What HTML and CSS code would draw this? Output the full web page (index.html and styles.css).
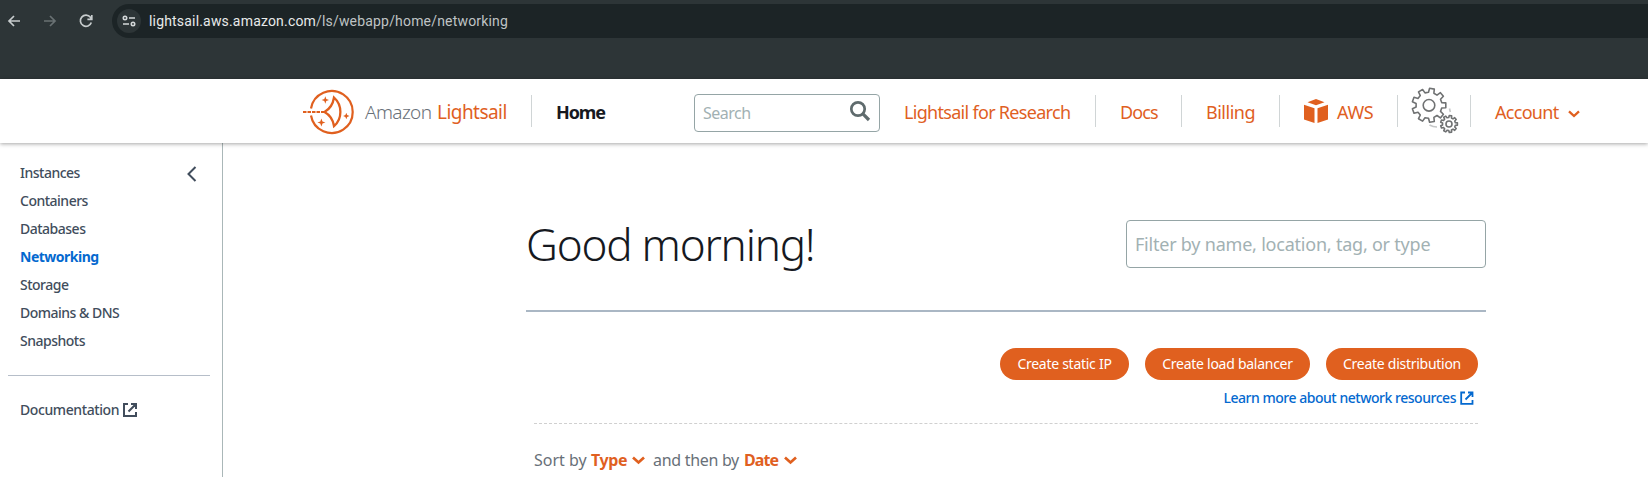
FILE: index.html
```html
<!DOCTYPE html>
<html lang="en">
<head>
<meta charset="utf-8">
<title>Amazon Lightsail</title>
<link rel="stylesheet" href="styles.css">
</head>
<body>
<div class="browser">
  <div class="browser-nav">
    <svg class="nav-icon" viewBox="0 0 16 16"><path d="M14 8H3M8 3 3 8l5 5"/></svg>
    <svg class="nav-icon disabled" viewBox="0 0 16 16"><path d="M2 8h11M8 3l5 5-5 5"/></svg>
    <svg class="nav-icon" viewBox="0 0 16 16"><path d="M13.3 9.5A5.6 5.6 0 1 1 12.4 4.3L13.6 6M13.8 2v4.4H9.4"/></svg>
  </div>
  <div class="omnibox">
    <span class="site-info"><svg width="14" height="12" viewBox="0 0 14 12"><circle cx="3" cy="3" r="1.7"/><path d="M7 3h6M1 9h6"/><circle cx="11" cy="9" r="1.7"/></svg></span>
    <span class="url"><b class="domain">lightsail.aws.amazon.com</b>/ls/webapp/home/networking</span>
  </div>
</div>
<header class="header">
  <a class="brand">
    <svg class="logo" width="54" height="48" viewBox="0 0 54 48"><g fill="none" stroke="#e0601f" stroke-width="2.2"><path d="M9 20.500a21 21 0 1 1 0 7"/><path d="M1 24h21" stroke-dasharray="3.500 1"/><path d="M32 9.500C40.500 17 40.500 31 32 38C31 31.500 27.500 26.700 22.500 24C27.500 21.200 31 16 32 9.500Z" stroke-width="2.300"/></g><path fill="#e0601f" d="M23.300 8.300l1 2.700 2.700 1-2.700 1-1 2.700-1-2.700-2.700-1 2.700-1zM44.300 24.800l.9 2.300 2.300.9-2.300.9-.9 2.300-.9-2.300-2.300-.9 2.300-.9zM19.400 30.500l1.100 2.900 2.900 1.100-2.900 1.100-1.100 2.900-1.100-2.900-2.900-1.100 2.900-1.100z"/></svg>
    <span class="brand-amazon">Amazon</span><span class="brand-name">Lightsail</span>
  </a>
  <a class="home">Home</a>
  <div class="search"><span class="search-hint">Search</span><svg width="22" height="22" viewBox="0 0 22 22" fill="none" stroke="#5f6b6d" stroke-width="2.700"><circle cx="9" cy="9" r="6.700"/><path d="M13.700 13.700l6.300 6.300" stroke-width="3.200"/></svg></div>
  <a class="link research">Lightsail for Research</a>
  <a class="link docs">Docs</a>
  <a class="link billing">Billing</a>
  <a class="link aws"><svg width="24" height="24" viewBox="0 0 24 24" fill="#e0601f"><path d="M12 0l8.500 3.200L12 6.300 3.500 3.200zM0 5.800l10.500 3.400V24L0 20.600zM24 5.800L13.500 9.200V24L24 20.600z"/></svg><span>AWS</span></a>
  <a class="gears"><svg width="48" height="48" viewBox="0 0 48 48" fill="none" stroke="#707273" stroke-width="1.600" stroke-linejoin="round">
    <defs><path id="gear" vector-effect="non-scaling-stroke" d="M-.5-13 .6-17 5.300-16.200 4.900-12.100 8-10.200 11.400-12.600 14.400-9 11.500-6.100 12.700-2.700 16.800-2.400V2.400L12.700 2.700 11.500 6.100 14.400 9 11.400 12.600 8 10.200 4.900 12.100 5.300 16.200 .6 17-.5 13-4 12.400-6.400 15.800-10.500 13.400-8.700 9.700-11 6.900-15 8-16.600 3.500-12.900 1.800V-1.800L-16.600-3.500-15-8-11-6.900-8.700-9.700-10.500-13.400-6.400-15.800-4-12.400Z"/></defs>
    <use href="#gear" x="18" y="18.300"/><circle cx="18" cy="18.300" r="5.800"/>
    <use href="#gear" transform="translate(38 37) scale(.5)"/><circle cx="38" cy="37" r="3"/>
    <path stroke="#c5c7c8" d="M18.500 38q3.500 2 7.500 2M38.500 21.500l.8 3.500"/></svg></a>
  <a class="link account"><span>Account</span><svg width="12" height="8" viewBox="0 0 12 8" fill="none" stroke="#e0601f" stroke-width="2.300"><path d="M1 1.300l5 4.700 5-4.700"/></svg></a>
</header>
<div class="body">
  <nav class="sidebar">
    <svg class="collapse" width="10" height="16" viewBox="0 0 10 16" fill="none" stroke="#414d5c" stroke-width="2"><path d="M8.500 1L1.500 8l7 7"/></svg>
    <ul class="menu">
      <li>Instances</li><li>Containers</li><li>Databases</li><li class="active">Networking</li><li>Storage</li><li>Domains &amp; DNS</li><li>Snapshots</li>
    </ul>
    <a class="documentation"><span>Documentation</span><svg width="14" height="14" viewBox="0 0 14 14" fill="none" stroke="#414d5c" stroke-width="2"><path d="M5 1H1v12h12V9M8 1h5v5M13 1L5.500 8.500"/></svg></a>
  </nav>
  <main class="main">
    <div class="greeting"><h1 class="title">Good morning!</h1><div class="filter"><span>Filter by name, location, tag, or type</span></div></div>
    <section class="resources">
      <div class="actions"><button class="btn static">Create static IP</button><button class="btn balancer">Create load balancer</button><button class="btn distribution">Create distribution</button></div>
      <a class="learn"><span>Learn more about network resources</span><svg width="14" height="14" viewBox="0 0 14 14" fill="none" stroke="#0469cf" stroke-width="1.800"><path d="M5 1.500H1.200v11.300h11.300V9M8 1.500h4.500V6M12.500 1.500L5.500 8.500"/></svg></a>
      <div class="sort"><span class="sort-by">Sort by</span><b class="type">Type</b><svg width="13" height="9" viewBox="0 0 13 9"><path d="M1 1.500l5.500 5 5.500-5"/></svg><span class="then">and then by</span><b class="date">Date</b><svg width="13" height="9" viewBox="0 0 13 9"><path d="M1 1.500l5.500 5 5.500-5"/></svg></div>
    </section>
  </main>
</div>
</body>
</html>
```
FILE: styles.css
```css
* { box-sizing: border-box; }
body { margin: 0; height: 477px; overflow: hidden; background: #fff; font-family: "Noto Sans", "Open Sans", sans-serif; white-space: nowrap; color: #16191f; }
svg { flex: none; display: block; }
.browser { height: 79px; background: #2d3537; padding-top: 4px; display: flex; align-items: flex-start; }
.browser-nav { width: 112px; height: 34px; padding-left: 6px; display: flex; align-items: center; gap: 20px; }
.nav-icon { width: 16px; height: 16px; fill: none; stroke: #c7cccd; stroke-width: 1.7; }
.nav-icon.disabled { stroke: #697173; }
.omnibox { flex: 1; height: 34px; border-radius: 17px 0 0 17px; background: #1c2426; padding-left: 5px; display: flex; align-items: center; }
.site-info { width: 24px; height: 24px; border-radius: 50%; background: #2d3537; display: grid; place-items: center; margin-right: 8px; }
.site-info svg { fill: none; stroke: #d5d9da; stroke-width: 1.6; }
.url { font: 14px/16px Roboto, sans-serif; color: #bfc3c4; letter-spacing: .18px; }
.domain { font-weight: 400; color: #e8eaea; }
.header { position: relative; height: 64px; padding: 16px 0 0 302px; display: flex; background: #fff; box-shadow: 0 1px 4px rgba(0,0,0,.35); font-size: 18px; line-height: 34px; z-index: 1; }
.brand { width: 230px; height: 32px; border-right: 1px solid #d0d5d6; display: flex; align-items: center; }
.brand > * { margin-top: 2px; }
.logo { margin-right: 9px; }
.brand-amazon { width: 72px; color: #687078; font-weight: 300; letter-spacing: -.6px; font-size: 19px; }
.brand-name { color: #e0601f; letter-spacing: -.55px; font-size: 19px; }
.home { width: 162px; padding-left: 24px; font-weight: 700; letter-spacing: -1.1px; }
.search { width: 186px; height: 38px; margin-top: -1px; border: 1px solid #95a5a6; border-radius: 4px; padding: 0 8px; display: flex; align-items: center; justify-content: space-between; color: #a2b1b3; font-size: 16px; letter-spacing: -.5px; }
.search svg { margin-top: -4px; }
.link { height: 32px; color: #e0601f; border-right: 1px solid #d0d5d6; }
.research { width: 216px; padding-left: 24px; letter-spacing: -.7px; }
.docs { width: 86px; padding-left: 24px; letter-spacing: -.9px; }
.billing { width: 98px; padding-left: 24px; letter-spacing: -.5px; }
.aws { width: 118px; padding-left: 24px; display: flex; align-items: center; gap: 9px; letter-spacing: -.4px; }
.aws span, .account span { padding-top: 2px; }
.gears { width: 73px; height: 32px; border-right: 1px solid #d0d5d6; padding-left: 13px; }
.gears svg { margin-top: -8px; }
.account { border: 0; padding-left: 24px; display: flex; align-items: center; letter-spacing: -.7px; }
.account span { width: 73px; }
.account svg { margin-top: 5px; }
.body { display: flex; height: 334px; }
.sidebar { position: relative; width: 223px; border-right: 1px solid #aab7b8; padding: 16px 12px 0 8px; color: #414d5c; font-size: 14px; line-height: 28px; font-weight: 500; letter-spacing: -.5px; }
.collapse { position: absolute; left: 187px; top: 23px; }
.menu { list-style: none; margin: 0; padding: 0 0 20px 12px; border-bottom: 1px solid #b6bec9; }
.menu .active { font-weight: 700; color: #0469cf; }
.documentation { display: flex; align-items: center; padding: 20px 0 0 12px; }
.documentation span { width: 103px; letter-spacing: -.4px; }
.main { width: 960px; margin-left: 303px; }
.greeting { height: 169px; border-bottom: 2px solid #aab7c4; display: flex; justify-content: space-between; padding-top: 77px; }
.title { margin: -11px 0 0; font-size: 44px; line-height: 70px; font-weight: 300; letter-spacing: -1.2px; }
.filter { width: 360px; height: 48px; border: 1px solid #95a5a6; border-radius: 4px; padding: 0 8px; font-size: 18px; line-height: 46px; color: #a2b1b3; letter-spacing: -.22px; }
.resources { padding: 36px 8px 0; }
.actions { display: flex; justify-content: flex-end; gap: 16px; }
.btn { height: 32px; border: 0; border-radius: 16px; padding: 0 0 2px; background: #e0601f; color: #fff; font: 14px "Noto Sans", sans-serif; letter-spacing: -.27px; }
.static { width: 129px; }
.balancer { width: 165px; }
.distribution { width: 152px; }
.learn { height: 44px; border-bottom: 1px dashed #d0d0d0; display: flex; justify-content: flex-end; padding: 5px 4px 0 0; color: #0469cf; font-size: 14px; line-height: 26px; font-weight: 500; letter-spacing: -.47px; }
.learn svg { margin: 6px 0 0 4px; }
.sort { display: flex; align-items: center; padding-top: 19px; font-size: 16px; line-height: 34px; color: #687078; }
.sort b, .sort svg { color: #e0601f; }
.sort svg { fill: none; stroke: #e0601f; stroke-width: 2.7; }
.sort-by { width: 57px; }
.type { width: 41px; letter-spacing: -.4px; }
.then { width: 91px; margin-left: 8px; letter-spacing: -.3px; }
.date { width: 40px; letter-spacing: -.9px; }
```
